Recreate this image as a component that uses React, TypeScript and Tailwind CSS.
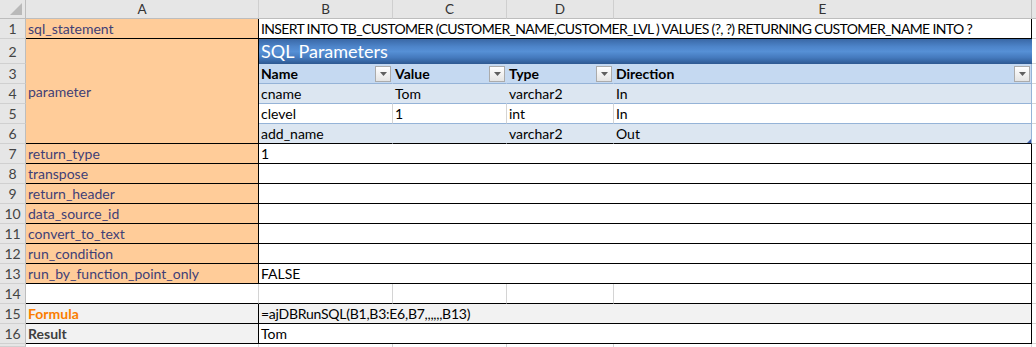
import React from 'react';

// column widths follow the sheet: row header, A, B, C, D, E, F (rest)
const COLS = 'grid-cols-[26px_233px_134px_114px_107px_418px_1fr]';
const ROWS = 'grid-rows-[19px_20px_25px_repeat(14,20px)_3px]';

type CellProps = { className?: string; children?: React.ReactNode };

function Cell({ className = '', children }: CellProps) {
  return (
    <div
      className={`flex items-center overflow-hidden whitespace-nowrap border-b border-r pl-[2px] ${className}`}
    >
      {children}
    </div>
  );
}

function RowHead({ n }: { n?: number }) {
  return (
    <div className="flex items-center justify-center overflow-hidden border-b border-r border-b-[#d0d0d0] border-r-[#bdbdbd] bg-[#e6e6e6] text-[14px] text-[#444]">
      {n}
    </div>
  );
}

function ColHead({ label, last }: { label: string; last?: boolean }) {
  return (
    <div
      className={`flex items-center justify-center border-b border-r border-b-[#bdbdbd] bg-[#e6e6e6] text-[13.5px] text-[#333] ${
        last ? 'border-r-[#bdbdbd]' : 'border-r-[#cfcfcf]'
      }`}
    >
      {label}
    </div>
  );
}

function FilterBtn() {
  return (
    <span className="mr-[1px] flex h-[16px] w-[16px] shrink-0 items-center justify-center border border-[#ababab] bg-linear-to-b from-white to-[#e4e4e4]">
      <svg width="7" height="4" viewBox="0 0 7 4">
        <path d="M0 0h7L3.5 4z" fill="#5f5f5f" />
      </svg>
    </span>
  );
}

// plain sheet cell outside the bordered area
function Blank({ className = '' }: { className?: string }) {
  return <div className={`border-b border-r border-[#d4d4d4] bg-white ${className}`} />;
}

const params = [
  { name: 'cname', value: 'Tom', type: 'varchar2', dir: 'In' },
  { name: 'clevel', value: '1', type: 'int', dir: 'In' },
  { name: 'add_name', value: '', type: 'varchar2', dir: 'Out' },
];

const options = [
  { key: 'return_type', value: '1' },
  { key: 'transpose', value: '' },
  { key: 'return_header', value: '' },
  { key: 'data_source_id', value: '' },
  { key: 'convert_to_text', value: '' },
  { key: 'run_condition', value: '' },
  { key: 'run_by_function_point_only', value: 'FALSE' },
];

export default function App() {
  return (
    <div
      className={`grid h-[347px] w-[1036px] overflow-hidden bg-white font-['Lato',sans-serif] text-[14px] text-black ${COLS} ${ROWS}`}
    >
      {/* ===== column headers ===== */}
      <div className="flex items-end justify-end border-b border-r border-[#bdbdbd] bg-[#e6e6e6] pb-[3px] pr-[3px]">
        <svg width="12" height="12" viewBox="0 0 12 12">
          <path d="M12 0v12H0z" fill="#b9b9b9" />
        </svg>
      </div>
      <ColHead label="A" />
      <ColHead label="B" />
      <ColHead label="C" />
      <ColHead label="D" />
      <ColHead label="E" last />
      <div className="border-b border-[#bdbdbd] bg-[#e6e6e6]" />

      {/* ===== row 1 ===== */}
      <RowHead n={1} />
      <Cell className="border-black bg-[#ffcc99] text-[#3f3f76]">sql_statement</Cell>
      <Cell className="col-span-4 border-black tracking-[-0.65px]">
        INSERT INTO TB_CUSTOMER (CUSTOMER_NAME,CUSTOMER_LVL ) VALUES (?, ?) RETURNING CUSTOMER_NAME INTO ?
      </Cell>
      <Blank className="border-r-0" />

      {/* ===== row 2: merged parameter + table title ===== */}
      <RowHead n={2} />
      <Cell className="row-span-5 border-black bg-[#ffcc99] text-[#3f3f76]">parameter</Cell>
      <div className="col-span-4 flex items-center bg-[linear-gradient(to_bottom,#3a68a6_0%,#4d84c9_30%,#5690d6_50%,#4479bd_75%,#2d5891_100%)] pl-[2px] text-[18px] text-white">
        SQL Parameters
      </div>
      <Blank className="border-r-0" />

      {/* ===== row 3: table header ===== */}
      <RowHead n={3} />
      {['Name', 'Value', 'Type', 'Direction'].map((h, i) => (
        <Cell
          key={h}
          className={`justify-between border-b-[#95b3d7] bg-[#c5d9f1] font-bold ${
            i === 3 ? 'border-r-[#95b3d7]' : 'border-r-[#c5d9f1]'
          }`}
        >
          <span>{h}</span>
          <FilterBtn />
        </Cell>
      ))}
      <Blank className="border-r-0" />

      {/* ===== rows 4-6: table body ===== */}
      {params.map((p, r) => {
        const band = r % 2 === 0;
        const bg = band ? 'bg-[#dce6f1]' : 'bg-white';
        const sep = band ? 'border-r-[#dce6f1]' : 'border-r-[#d4d4d4]';
        const bottom = r === params.length - 1 ? 'border-b-black' : 'border-b-[#95b3d7]';
        return (
          <React.Fragment key={p.name}>
            <RowHead n={4 + r} />
            <Cell className={`${bg} ${sep} ${bottom}`}>{p.name}</Cell>
            <Cell className={`${bg} ${sep} ${bottom}`}>{p.value}</Cell>
            <Cell className={`${bg} ${sep} ${bottom}`}>{p.type}</Cell>
            <Cell className={`relative ${bg} border-r-[#95b3d7] ${bottom}`}>
              {p.dir}
              {r === params.length - 1 && (
                <svg className="absolute bottom-0 right-0" width="4" height="4" viewBox="0 0 4 4">
                  <path d="M4 0v4H0z" fill="#3f5ea8" />
                </svg>
              )}
            </Cell>
            <Blank className="border-r-0" />
          </React.Fragment>
        );
      })}

      {/* ===== rows 7-13: options ===== */}
      {options.map((o, r) => (
        <React.Fragment key={o.key}>
          <RowHead n={7 + r} />
          <Cell className="border-black bg-[#ffcc99] text-[#3f3f76]">{o.key}</Cell>
          <Cell className="col-span-4 border-black">{o.value}</Cell>
          <Blank className="border-r-0" />
        </React.Fragment>
      ))}

      {/* ===== row 14: empty ===== */}
      <RowHead n={14} />
      <Cell className="border-b-black border-r-[#d4d4d4]" />
      <Cell className="border-b-black border-r-[#d4d4d4]" />
      <Cell className="border-b-black border-r-[#d4d4d4]" />
      <Cell className="border-b-black border-r-[#d4d4d4]" />
      <Cell className="border-black" />
      <Blank className="border-r-0" />

      {/* ===== row 15: formula ===== */}
      <RowHead n={15} />
      <Cell className="border-black bg-[#f2f2f2] font-bold text-[#fa7d00]">Formula</Cell>
      <Cell className="col-span-4 border-black bg-[#f2f2f2] tracking-[-0.25px]">
        =ajDBRunSQL(B1,B3:E6,B7,,,,,,B13)
      </Cell>
      <Blank className="border-r-0" />

      {/* ===== row 16: result ===== */}
      <RowHead n={16} />
      <Cell className="border-black bg-[#f2f2f2] font-bold text-[#3f3f3f]">Result</Cell>
      <Cell className="col-span-4 border-black">Tom</Cell>
      <Blank className="border-r-0" />

      {/* ===== row 17 (cut off) ===== */}
      <RowHead />
      <Blank className="border-b-0" />
      <Blank className="border-b-0" />
      <Blank className="border-b-0" />
      <Blank className="border-b-0" />
      <Blank className="border-b-0" />
      <Blank className="border-b-0 border-r-0" />
    </div>
  );
}
